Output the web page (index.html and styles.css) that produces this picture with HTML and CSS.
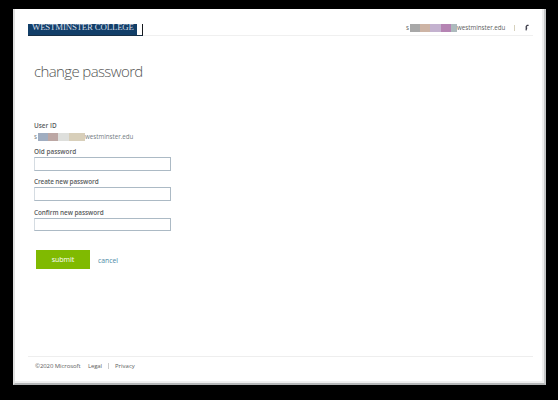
FILE: index.html
```html
<!DOCTYPE html>
<html lang="en">
<head>
<meta charset="utf-8">
<title>Change password</title>
<link rel="stylesheet" href="styles.css">
</head>
<body>
<div class="window">
  <header class="header">
    <div class="logo"><span class="logo-name">WESTMINSTER COLLEGE</span></div>
    <div class="account">
      <span class="account-start">s</span><span class="mask mask-top"><i></i><i></i><i></i><i></i><i></i></span><span class="account-domain">westminster.edu</span>
      <span class="account-divider"></span>
      <svg class="help" viewBox="0 0 6 8"><path d="M4.6 1.3H3.2L2.2 2.5v1.7h1M2.5 4.2 2 6.4" fill="none" stroke="#383846" stroke-width="1.2"/></svg>
    </div>
  </header>
  <main class="content">
    <h1>change password</h1>
    <form class="form">
      <div class="label label-user">User ID</div>
      <div class="user"><span class="user-start">s</span><span class="mask mask-user"><i></i><i></i><i></i><i></i></span><span class="user-domain">westminster.edu</span></div>
      <label class="label label-old" for="old">Old password</label>
      <input id="old" type="password">
      <label class="label label-new" for="new">Create new password</label>
      <input id="new" class="input-new" type="password">
      <label class="label label-confirm" for="confirm">Confirm new password</label>
      <input id="confirm" class="input-confirm" type="password">
      <div class="actions"><button type="button">submit</button><a class="cancel">cancel</a></div>
    </form>
  </main>
  <footer class="footer">
    <span class="copyright">©2020 Microsoft</span><span class="legal">Legal</span><span class="footer-divider"></span><span class="privacy">Privacy</span>
  </footer>
</div>
</body>
</html>
```
FILE: styles.css
```css
* { box-sizing: border-box; }
body {
  margin: 0;
  height: 400px;
  padding: 9px 12px 15px 13px;
  overflow: hidden;
  background: #000;
  font-family: "Open Sans", "Noto Sans", sans-serif;
  font-size: 6px;
  color: #606060;
  white-space: nowrap;
}
.window {
  display: flex;
  flex-direction: column;
  width: 533px;
  height: 376px;
  padding: 14px 11px 0 13px;
  background: #fff;
  border: solid;
  border-width: 0 2px 2px 2px;
  border-color: #fff #c4c6c7 #b4b6b7 #e0e0e0;
  box-shadow: inset -2px -2px 1px #eee;
}
.header {
  display: flex;
  justify-content: space-between;
  height: 13px;
  border-bottom: 1px solid #f0f0f0;
}
.logo {
  width: 115px;
  height: 12px;
  margin-top: 1px;
  border-right: 1px solid #15191e;
  border-bottom: 1px solid #173047;
}
.logo-name {
  display: block;
  width: 109px;
  height: 11px;
  padding-left: 4px;
  overflow: hidden;
  background: #123f69;
  color: #d5dde8;
  font: 8.8px/7px "Liberation Serif", serif;
  letter-spacing: -0.16px;
}
.account {
  display: flex;
  align-items: center;
  width: 127px;
  height: 9px;
  font-size: 6.2px;
}
.account-start, .user-start { width: 4px; }
.mask { display: flex; flex: none; height: 8px; }
.mask i { flex: 1; }
.mask-top { width: 47px; }
.mask-top i:nth-child(1) { background: #a8a8a8; }
.mask-top i:nth-child(2) { background: #cdb4a5; }
.mask-top i:nth-child(3) { background: #c4b2cf; }
.mask-top i:nth-child(4) { background: #b584b3; }
.mask-top i:nth-child(5) { background: #adbabd; flex: .6; }
.account-domain { width: 48px; }
.account-divider { width: 1px; height: 6px; margin-left: 9px; background: #d6d1bc; }
.help { width: 6px; height: 8px; margin-left: 9px; }
.content { flex: 1; padding-left: 6px; }
h1 {
  margin: 25px 0 0;
  font-size: 15px;
  line-height: 20px;
  font-weight: 300;
  color: #555;
  letter-spacing: -0.62px;
}
.form { margin-top: 40px; width: 140px; }
.label {
  display: block;
  height: 9px;
  line-height: 9px;
  font-size: 6.4px;
  font-weight: 600;
  color: #5a5d60;
}
.label-new { letter-spacing: -0.1px; }
.label-confirm { letter-spacing: -0.07px; }
.user {
  display: flex;
  align-items: center;
  height: 9px;
  margin: 2px 0 6px;
  color: #737b82;
  font-size: 6.2px;
}
.mask-user { width: 47px; }
.mask-user i:nth-child(1) { background: #a0adc0; }
.mask-user i:nth-child(2) { background: #bca7a4; }
.mask-user i:nth-child(3) { background: #dedfdc; }
.mask-user i:nth-child(4) { background: #d8cfba; flex: 1.6; }
input {
  display: block;
  width: 137px;
  height: 14px;
  margin: 1px 0 6px;
  padding: 0 3px;
  border: 1px solid #acbac5;
  border-left-color: #d5dce2;
  border-radius: 0;
  background: #fff;
}
.input-new { margin-bottom: 7px; }
.input-confirm { height: 13px; }
.actions { display: flex; align-items: center; margin: 19px 0 0 2px; }
button {
  width: 54px;
  height: 19px;
  padding: 0;
  border: 0;
  background: #80ba01;
  color: #fff;
  font: 7px/19px "Open Sans", sans-serif;
}
.cancel { margin-left: 8px; font-size: 6.8px; line-height: 9px; margin-top: 2px; color: #4c8aa6; }
.footer {
  display: flex;
  align-items: center;
  height: 27px;
  padding: 0 0 9px 7px;
  border-top: 1px solid #eee;
}
.copyright { width: 53px; letter-spacing: -0.08px; }
.legal { width: 20px; letter-spacing: -0.15px; }
.footer-divider { width: 1px; height: 6px; background: #ccc; margin-right: 6px; }
```
